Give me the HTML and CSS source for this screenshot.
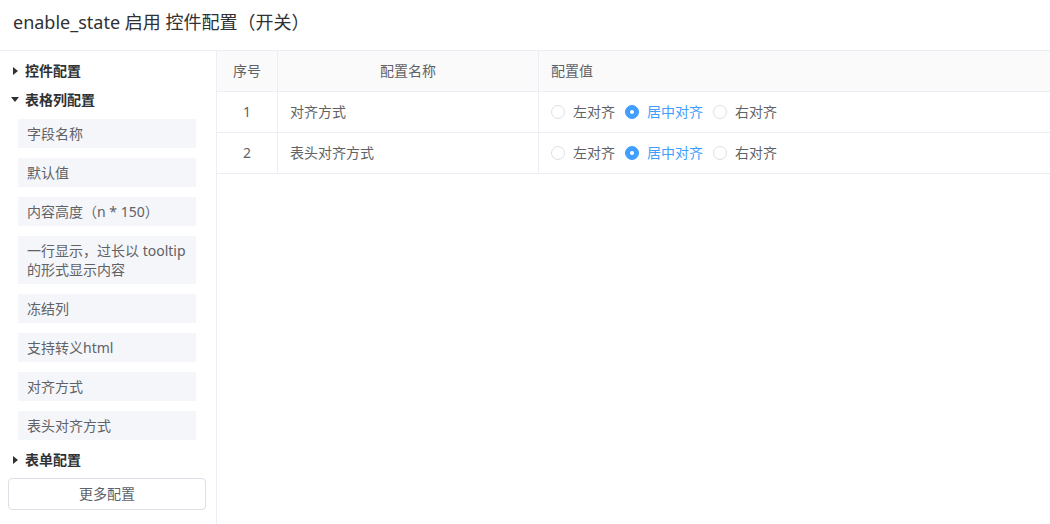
FILE: index.html
```html
<!DOCTYPE html>
<html lang="zh-CN">
<head>
<meta charset="utf-8">
<title>enable_state</title>
<link rel="stylesheet" href="styles.css">
</head>
<body>
<div class="page">
  <header class="top">enable_state 启用 控件配置（开关）</header>
  <div class="main">
    <aside class="side">
      <div class="group"><span class="caret right"></span><span class="gtitle">控件配置</span></div>
      <div class="group"><span class="caret down"></span><span class="gtitle">表格列配置</span></div>
      <ul class="items">
        <li class="item">字段名称</li>
        <li class="item">默认值</li>
        <li class="item">内容高度（n * 150）</li>
        <li class="item">一行显示，过长以 tooltip 的形式显示内容</li>
        <li class="item">冻结列</li>
        <li class="item">支持转义html</li>
        <li class="item">对齐方式</li>
        <li class="item">表头对齐方式</li>
      </ul>
      <div class="group"><span class="caret right"></span><span class="gtitle">表单配置</span></div>
      <button class="more">更多配置</button>
    </aside>
    <section class="content">
      <div class="grid">
        <div class="cell head center">序号</div>
        <div class="cell head center">配置名称</div>
        <div class="cell head">配置值</div>

        <div class="cell center">1</div>
        <div class="cell">对齐方式</div>
        <div class="cell">
          <div class="radios">
            <label class="radio"><span class="dot"></span><span class="lbl">左对齐</span></label>
            <label class="radio on"><span class="dot"></span><span class="lbl">居中对齐</span></label>
            <label class="radio"><span class="dot"></span><span class="lbl">右对齐</span></label>
          </div>
        </div>

        <div class="cell center">2</div>
        <div class="cell">表头对齐方式</div>
        <div class="cell">
          <div class="radios">
            <label class="radio"><span class="dot"></span><span class="lbl">左对齐</span></label>
            <label class="radio on"><span class="dot"></span><span class="lbl">居中对齐</span></label>
            <label class="radio"><span class="dot"></span><span class="lbl">右对齐</span></label>
          </div>
        </div>
      </div>
    </section>
  </div>
</div>
</body>
</html>
```
FILE: styles.css
```css
* { box-sizing: border-box; }
html, body { margin: 0; padding: 0; }
body {
  font-family: "Noto Sans", "Noto Sans CJK SC", sans-serif;
  font-size: 14px;
  color: #606266;
  background: #fff;
  width: 1050px;
  height: 524px;
  overflow: hidden;
}
.page { display: flex; flex-direction: column; height: 524px; }
.top {
  height: 51px;
  padding-left: 13px;
  line-height: 44px;
  font-size: 18px;
  color: #303133;
  border-bottom: 1px solid #ebeef5;
  flex: none;
}
.main { display: flex; flex: 1; min-height: 0; }
.side {
  width: 217px;
  flex: none;
  border-right: 1px solid #ebeef5;
  padding: 5px 0 0 0;
  display: flex;
  flex-direction: column;
}
.group {
  height: 29px;
  display: flex;
  align-items: center;
  padding-left: 11px;
  color: #303133;
  font-weight: 700;
}
.caret { width: 7px; height: 8px; margin-right: 7px; display: flex; align-items: center; justify-content: center; }
.caret.right::before {
  content: "";
  border-style: solid;
  border-width: 4.5px 0 4.5px 5px;
  border-color: transparent transparent transparent #303133;
  margin-left: 2px;
}
.caret.down::before {
  content: "";
  border-style: solid;
  border-width: 5px 4px 0 4px;
  border-color: #303133 transparent transparent transparent;
}
.gtitle { line-height: 20px; }
.items {
  list-style: none;
  margin: 5px 0 5px 18px;
  padding: 0;
  width: 178px;
  display: flex;
  flex-direction: column;
  gap: 10px;
}
.item {
  background: #f5f6fa;
  padding: 5px 9px;
  line-height: 19px;
  color: #606266;
}
.more {
  margin: 4px 0 0 8px;
  width: 198px;
  height: 32px;
  border: 1px solid #dcdfe6;
  border-radius: 4px;
  background: #fff;
  font-family: inherit;
  font-size: 14px;
  color: #606266;
  padding: 0 0 2px 0;
}
.content { flex: 1; min-width: 0; }
.grid {
  display: grid;
  grid-template-columns: 61px 261px 1fr;
}
.cell {
  height: 41px;
  border-bottom: 1px solid #ebeef5;
  border-right: 1px solid #ebeef5;
  padding: 0 12px 2px 12px;
  display: flex;
  align-items: center;
  color: #606266;
}
.cell:nth-child(3n) { border-right: none; }
.cell.head { background: #fafafa; }
.cell.center { justify-content: center; }
.radios { display: flex; align-items: center; gap: 10px; }
.radio { display: flex; align-items: center; gap: 8px; }
.dot {
  width: 14px; height: 14px;
  border: 1px solid #dcdfe6;
  border-radius: 50%;
  background: #fff;
  position: relative;
  margin-top: 1px;
}
.radio.on .dot { background: #409eff; border-color: #409eff; }
.radio.on .dot::after {
  content: "";
  position: absolute;
  left: 50%; top: 50%;
  width: 4px; height: 4px;
  margin: -2px 0 0 -2px;
  border-radius: 50%;
  background: #fff;
}
.radio.on .lbl { color: #409eff; }
```
